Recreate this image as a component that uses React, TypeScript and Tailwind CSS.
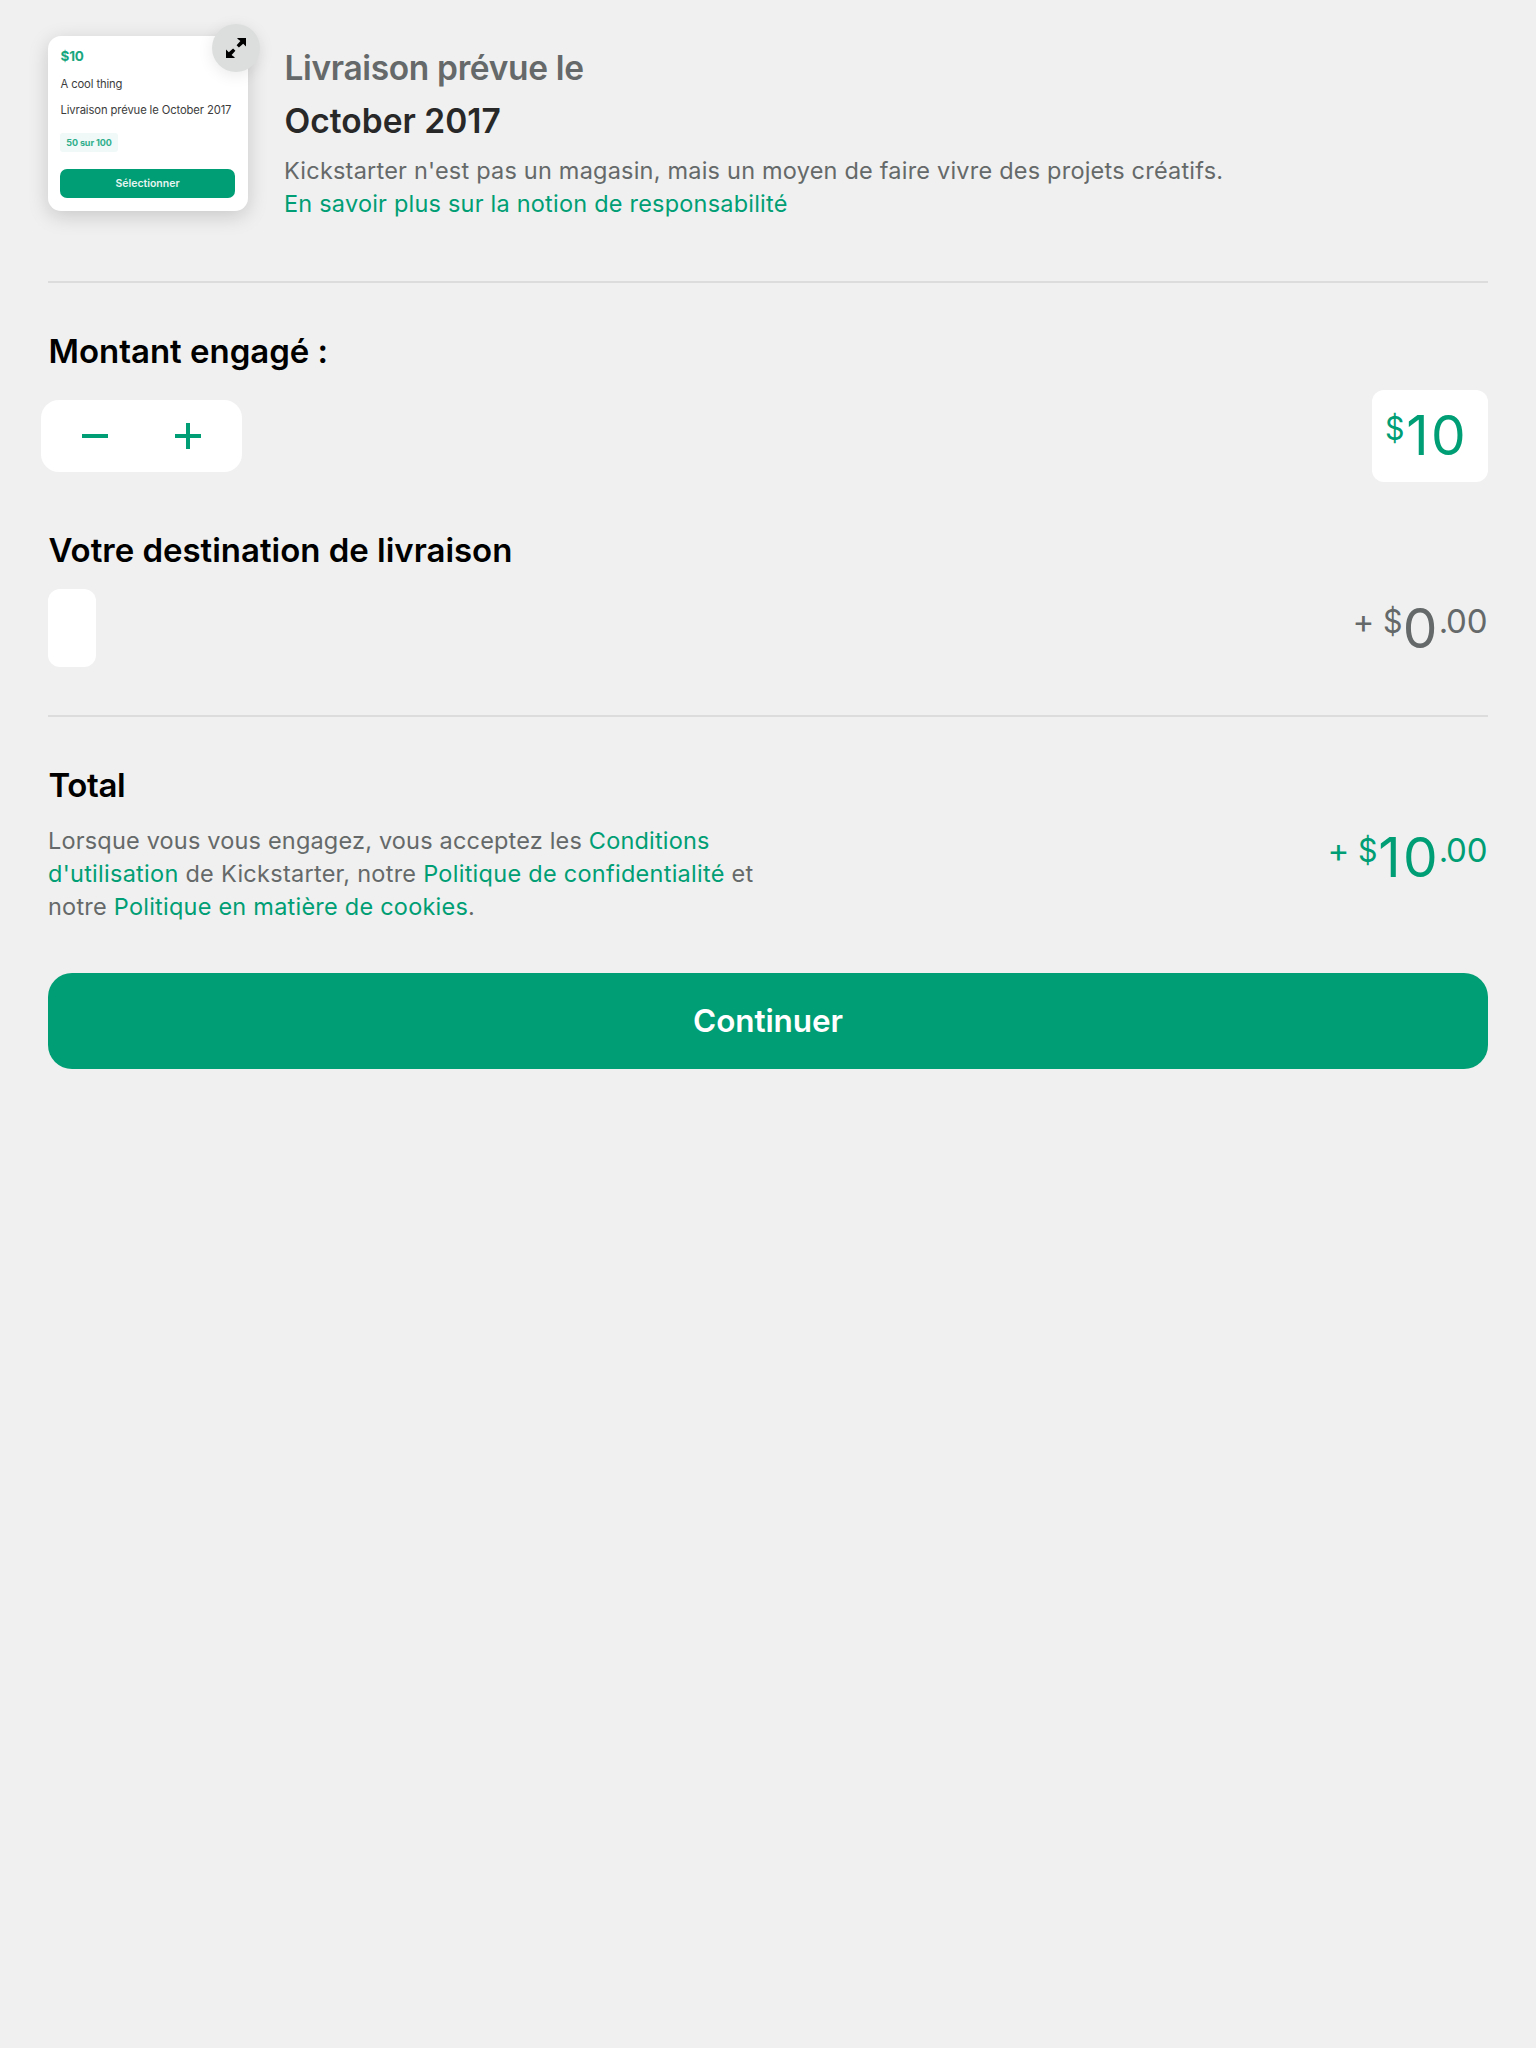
import type { ReactNode } from 'react';

function ExpandIcon() {
  return (
    <svg viewBox="0 0 20 20" className="size-5" fill="#000">
      <path d="M11.4 0H20V8.6L17.2 5.8L12.9 9.6L10.6 7.3L14.4 3L11.4 0.8Z" />
      <path d="M8.6 20H0V11.4L2.8 14.2L7.1 10.4L9.4 12.7L5.6 17L8.6 19.2Z" />
    </svg>
  );
}

function RewardCard() {
  return (
    <div className="relative h-[175px] w-[200px] shrink-0 rounded-[13px] bg-white px-[12.5px] shadow-[0_5px_20px_rgba(0,0,0,0.17)]">
      <div className="pt-[12px] text-[13.5px] leading-[17px] font-bold tracking-[-0.2px] text-[#1aa77f]">$10</div>
      <div className="mt-[10px] text-[11.25px] leading-[18px] tracking-[-0.12px] text-[#3c3c3c]">A cool thing</div>
      <div className="mt-[8px] text-[11.25px] leading-[18px] tracking-[-0.12px] whitespace-nowrap text-[#3c3c3c]">
        Livraison prévue le October 2017
      </div>
      <div className="mt-[14px] -ml-[0.5px] flex h-[19px] w-[58px] items-center justify-center rounded-[3px] bg-[#f0f9f7] text-[9px] font-bold tracking-[-0.1px] whitespace-nowrap text-[#2fae8b]">
        50 sur 100
      </div>
      <button className="mt-[17px] -ml-[0.5px] flex h-[29px] w-[175px] items-center justify-center rounded-[7px] bg-[#009e74] pt-px text-[10.5px] font-semibold text-[#e6f5f1]">
        Sélectionner
      </button>
      <button className="absolute -top-[12px] left-[164px] flex size-12 items-center justify-center rounded-full bg-[#dcdedd] shadow-[0_3px_16px_rgba(0,0,0,0.09)]">
        <ExpandIcon />
      </button>
    </div>
  );
}

function Heading({ children, className = '-tracking-[0.02px]' }: { children: ReactNode; className?: string }) {
  return <h2 className={`pl-[0.5px] text-[33px] leading-[40px] font-semibold text-black ${className}`}>{children}</h2>;
}

function Dollar({ className }: { className: string }) {
  return (
    <span className={`pt-[4px] text-[33px] ${className}`}>
      <span className="block origin-left scale-x-[0.92]">$</span>
    </span>
  );
}

function Amount({ value, className, dollarWidth, valueWidth }: { value: string; className: string; dollarWidth: string; valueWidth: string }) {
  return (
    <div className={`flex items-start leading-none whitespace-nowrap ${className}`}>
      <span className="w-[31px] pt-[4px] text-[33px]">+</span>
      <Dollar className={dollarWidth} />
      <span className={`text-[55px] ${valueWidth}`}>{value}</span>
      <span className="w-[7.3px] pt-[4px] text-[33px]">.</span>
      <span className="w-[42px] pt-[4px] text-[33px]">00</span>
    </div>
  );
}

function Link({ children }: { children: ReactNode }) {
  return <a className="text-[#009e74]">{children}</a>;
}

export default function App() {
  return (
    <main className="min-h-[2048px] bg-[#f0f0f0] px-12 pt-9 font-['Inter',sans-serif]">
      <header className="flex h-[245px]">
        <RewardCard />
        <div className="ml-9 pt-[6px]">
          <div className="pl-[0.5px] text-[33.5px] leading-[53px] font-semibold tracking-[-0.35px] text-[#656969]">Livraison prévue le</div>
          <div className="pl-[0.5px] text-[33.5px] leading-[53px] font-semibold tracking-[0.02px] text-[#282828]">October 2017</div>
          <p className="mt-[6px] text-[23.5px] leading-[33px] tracking-[0.21px] text-[#656969]">
            Kickstarter n'est pas un magasin, mais un moyen de faire vivre des projets créatifs.
            <br />
            <Link>En savoir plus sur la notion de responsabilité</Link>
          </p>
        </div>
      </header>
      <hr className="h-[2px] border-0 bg-[#dcdcdc]" />

      <section className="pt-[48px]">
        <Heading>Montant engagé :</Heading>
        <div className="mt-[19px] flex h-[92px] items-center justify-between">
          <div className="-ml-[7px] flex h-[72px] w-[201px] items-center gap-[67px] rounded-[18px] bg-white pl-[41px]">
            <svg viewBox="0 0 26 26" className="size-[26px]" fill="#009e74">
              <rect y="11" width="26" height="4" />
            </svg>
            <svg viewBox="0 0 26 26" className="size-[26px]" fill="#009e74">
              <rect y="11" width="26" height="4" />
              <rect x="11" width="4" height="26" />
            </svg>
          </div>
          <div className="flex h-[92px] w-[116px] items-start rounded-xl bg-white pt-[17.5px] pl-[13.3px] leading-none text-[#009e74]">
            <Dollar className="w-[21px]" />
            <span className="text-[55px] tracking-[2.3px]">10</span>
          </div>
        </div>
      </section>

      <section className="pt-[48px]">
        <Heading>Votre destination de livraison</Heading>
        <div className="mt-[19px] flex h-[78px] justify-between">
          <div className="w-12 rounded-xl bg-white" />
          <Amount value="0" className="pt-[11.5px] text-[#656969]" dollarWidth="w-[19.4px]" valueWidth="w-[35.9px]" />
        </div>
      </section>
      <hr className="mt-12 h-[2px] border-0 bg-[#dcdcdc]" />

      <section className="pt-[48px]">
        <Heading className="tracking-[-0.4px]">Total</Heading>
        <div className="mt-[19px] flex justify-between">
          <p className="w-[720px] text-[23.5px] leading-[33px] tracking-[0.23px] whitespace-nowrap text-[#656969]">
            <span className="tracking-[0.18px]">
              Lorsque vous vous engagez, vous acceptez les <Link>Conditions</Link>
            </span>
            <br />
            <span className="tracking-[0.27px]">
              <Link>d'utilisation</Link> de Kickstarter, notre <Link>Politique de confidentialité</Link> et
            </span>
            <br />
            notre <Link>Politique en matière de cookies</Link>.
          </p>
          <Amount value="10" className="pt-[5.5px] text-[#009e74]" dollarWidth="w-[19.9px]" valueWidth="w-[60.4px] tracking-[2.3px]" />
        </div>
      </section>

      <button className="mt-[50px] flex h-24 w-full items-center justify-center rounded-3xl bg-[#009e74] text-[31.5px] font-semibold tracking-[-0.1px] text-white">
        Continuer
      </button>
    </main>
  );
}
